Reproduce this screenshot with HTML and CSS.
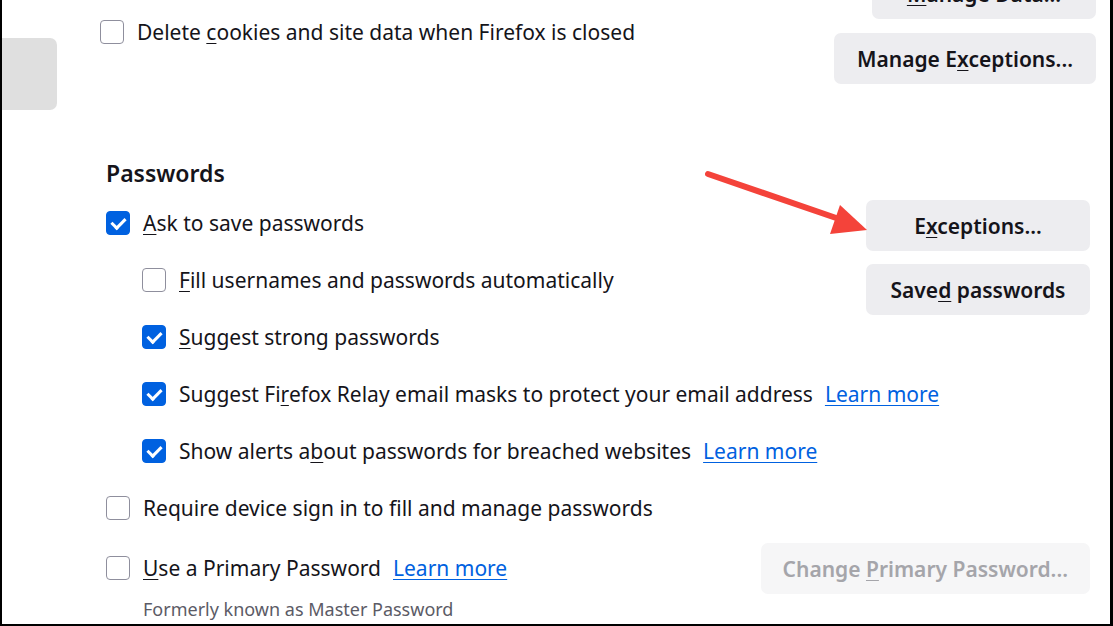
FILE: index.html
```html
<!DOCTYPE html>
<html lang="en">
<head>
    <meta charset="UTF-8">
    <title>Settings - Privacy</title>
    <link rel="stylesheet" href="styles.css">
</head>
<body>
    <div class="frame">
        <div class="sidebar">
            <div class="tab"></div>
        </div>

        <div class="content">
            <section class="group cookies">
                <div class="options">
                    <label class="option">
                        <span class="box"></span>
                        <span>Delete <u>c</u>ookies and site data when Firefox is closed</span>
                    </label>
                </div>
                <div class="actions">
                    <button class="btn wide"><u>M</u>anage Data...</button>
                    <button class="btn exceptions">Manage E<u>x</u>ceptions...</button>
                </div>
            </section>

            <section class="group passwords">
                <h2>Passwords</h2>
                <div class="pw-top">
                    <div class="options">
                        <label class="option">
                            <span class="box checked"></span>
                            <span><u>A</u>sk to save passwords</span>
                        </label>
                        <label class="option sub">
                            <span class="box"></span>
                            <span><u>F</u>ill usernames and passwords automatically</span>
                        </label>
                    </div>
                    <div class="actions">
                        <button class="btn wide">E<u>x</u>ceptions...</button>
                        <button class="btn wide">Save<u>d</u> passwords</button>
                    </div>
                </div>

                <div class="options">
                    <label class="option sub">
                        <span class="box checked"></span>
                        <span><u>S</u>uggest strong passwords</span>
                    </label>
                    <label class="option sub">
                        <span class="box checked"></span>
                        <span>Suggest Fi<u>r</u>efox Relay email masks to protect your email address</span>
                        <a href="#" class="learn">Learn more</a>
                    </label>
                    <label class="option sub">
                        <span class="box checked"></span>
                        <span>Show alerts a<u>b</u>out passwords for breached websites</span>
                        <a href="#" class="learn">Learn more</a>
                    </label>
                    <label class="option">
                        <span class="box"></span>
                        <span>Require device sign in to fill and manage passwords</span>
                    </label>
                </div>

                <div class="pw-primary">
                    <div class="primary-left">
                        <label class="option">
                            <span class="box"></span>
                            <span><u>U</u>se a Primary Password</span>
                            <a href="#" class="learn">Learn more</a>
                        </label>
                        <p class="note">Formerly known as Master Password</p>
                    </div>
                    <button class="btn" disabled>Change <u>P</u>rimary Password...</button>
                </div>
            </section>
        </div>

        <!-- annotation arrow drawn over the screenshot -->
        <svg class="arrow" width="1113" height="626" viewBox="0 0 1113 626">
            <line x1="708" y1="174" x2="842" y2="220" stroke="#f4433a" stroke-width="6" stroke-linecap="round"/>
            <polygon points="867,230 840,205 830,234" fill="#f4433a"/>
        </svg>
    </div>
</body>
</html>
```

FILE: styles.css
```css
* {
    box-sizing: border-box;
}

body {
    margin: 0;
    background: #fff;
    color: #15141a;
    font-family: "Noto Sans", "Open Sans", sans-serif;
    font-size: 21px;
}

.frame {
    position: relative;
    display: flex;
    width: 1113px;
    height: 626px;
    border-left: 2px solid #000;
    border-right: 3px solid #000;
    border-bottom: 2px solid #000;
    overflow: hidden;
}

.sidebar {
    width: 55px;
    flex-shrink: 0;
    padding-top: 38px;
}

.tab {
    height: 72px;
    background: #dfdfdf;
    border-radius: 0 7px 7px 0;
}

.content {
    flex: 1;
    min-width: 0;
    display: flex;
    flex-direction: column;
}

.group {
    display: flex;
}

.cookies {
    justify-content: space-between;
    padding-left: 43px;
    padding-right: 14px;
    margin-top: -32px;
    height: 182px;
}

.cookies .options {
    padding-top: 32px;
}

.cookies .option {
    height: 64px;
}

.passwords {
    flex-direction: column;
    padding-left: 49px;
    padding-right: 20px;
}

h2 {
    margin: 8px 0 0;
    font-size: 23px;
    font-weight: 600;
    line-height: 30px;
}

.pw-top {
    display: flex;
    justify-content: space-between;
    align-items: flex-start;
    height: 114px;
    margin-top: 6px;
}

.options {
    display: flex;
    flex-direction: column;
}

.option {
    display: flex;
    align-items: center;
    height: 57px;
    white-space: nowrap;
}

.option.sub {
    padding-left: 36px;
}

.box {
    width: 24px;
    height: 24px;
    margin-right: 13px;
    border: 1px solid #8f8f9d;
    border-radius: 4px;
    flex-shrink: 0;
    position: relative;
}

.box.checked {
    background: #0061e0;
    border-color: #0061e0;
}

.box.checked::after {
    content: "";
    position: absolute;
    left: 7px;
    top: 3px;
    width: 6px;
    height: 11px;
    border: solid #fff;
    border-width: 0 3px 3px 0;
    transform: rotate(45deg);
}

u {
    text-decoration-thickness: 1px;
    text-underline-offset: 3px;
}

.learn {
    margin-left: 12px;
    color: #0061e0;
    text-decoration-thickness: 1px;
    text-underline-offset: 3px;
}

.actions {
    display: flex;
    flex-direction: column;
    align-items: flex-end;
    gap: 14px;
}

.passwords .actions {
    padding-top: 6px;
    gap: 13px;
}

.btn {
    height: 51px;
    padding: 0 22px;
    border: none;
    border-radius: 7px;
    background: #ededf0;
    color: #15141a;
    font-family: inherit;
    font-size: 21px;
    font-weight: 600;
    white-space: nowrap;
}

.btn.wide {
    width: 224px;
}

.btn.exceptions {
    width: 262px;
}

.btn:disabled {
    background: #f6f6f7;
    color: #a5a5aa;
}

.pw-primary {
    display: flex;
    justify-content: space-between;
    align-items: flex-start;
    margin-top: 5px;
}

.pw-primary .btn {
    margin-top: 2px;
    min-width: 329px;
}

.pw-primary .option {
    height: 54px;
}

.note {
    margin: 2px 0 0 37px;
    color: #5b5b66;
    font-size: 18px;
}

.arrow {
    position: absolute;
    left: -2px;
    top: 0;
    pointer-events: none;
}
```
